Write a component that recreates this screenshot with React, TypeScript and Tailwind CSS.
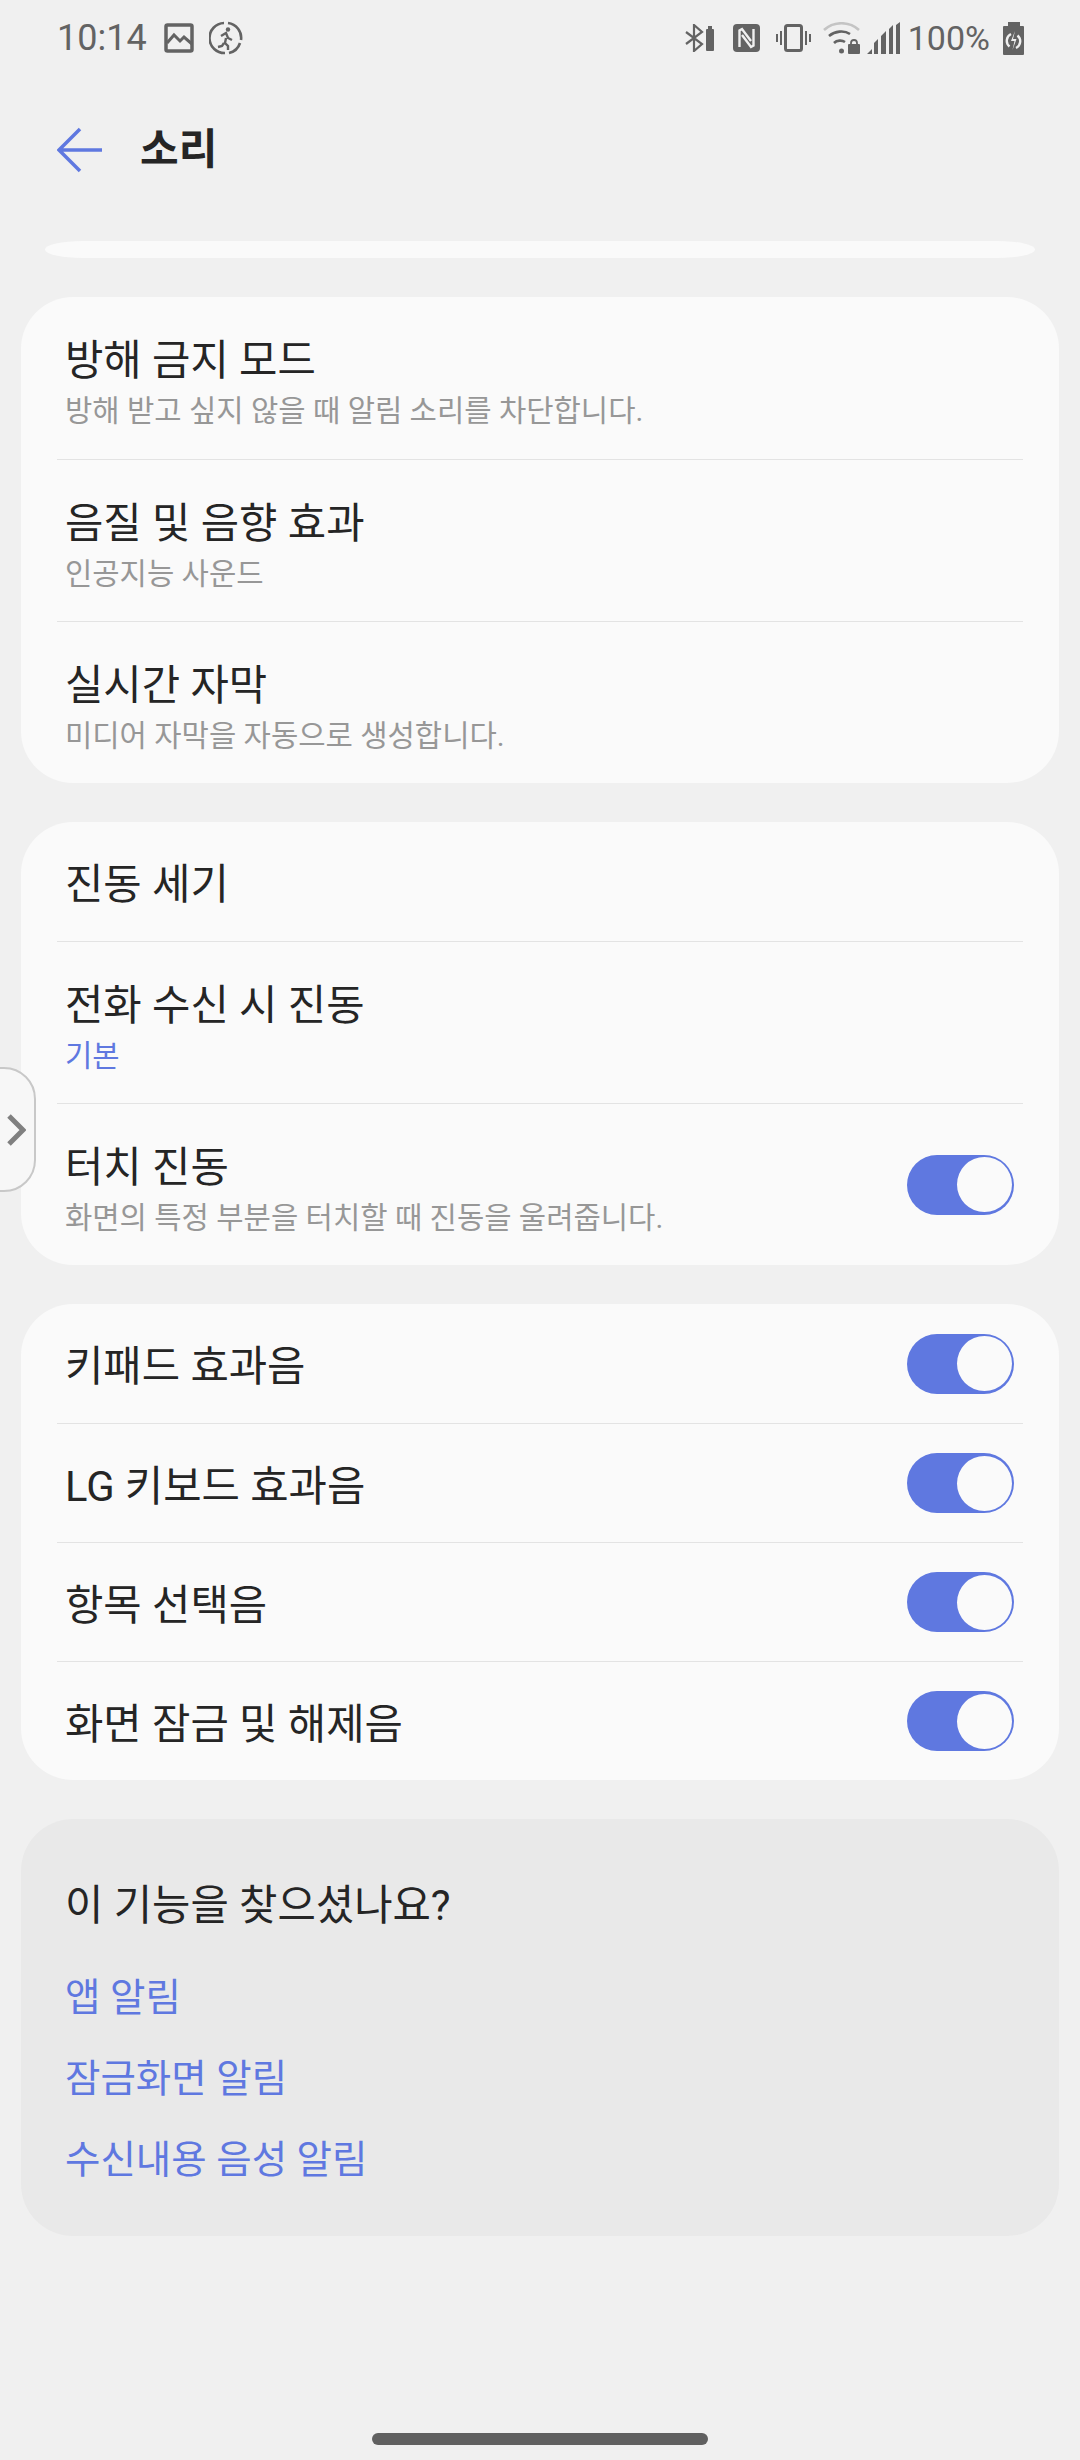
import React from "react";

const BLUE = "#5f78e0";

function Toggle() {
  return (
    <div className="w-[107px] h-[60px] rounded-full bg-[#5f78e0] flex items-center justify-end pr-[2px] shrink-0">
      <div className="w-[55px] h-[55px] rounded-full bg-[#fafafa]" />
    </div>
  );
}

function Row({
  title,
  sub,
  subBlue,
  toggle,
  first,
}: {
  title: string;
  sub?: string;
  subBlue?: boolean;
  toggle?: boolean;
  first?: boolean;
}) {
  return (
    <div className={`mx-[36px] flex items-center justify-between ${sub ? "h-[162px]" : "h-[119px]"} ${first ? "" : "border-t border-[#e3e3e3]"}`}>
      <div className={`pl-[8px] flex flex-col ${sub ? "pt-[9px]" : "pt-[7px]"}`}>
        <div className="text-[41.7px] leading-[54px] text-[#252525]">{title}</div>
        {sub && (
          <div className={`mt-[3px] text-[29.7px] leading-[40px] ${subBlue ? "text-[#5f78e0]" : "text-[#979797]"}`}>{sub}</div>
        )}
      </div>
      {toggle && (
        <div className="mr-[9px]">
          <Toggle />
        </div>
      )}
    </div>
  );
}

function Card({ children }: { children: React.ReactNode }) {
  return <div className="mx-[21px] mb-[39px] rounded-[52px] bg-[#fafafa] overflow-hidden">{children}</div>;
}

function StatusBar() {
  return (
    <div className="h-[76px] pl-[57px] pr-[56px] flex items-center justify-between text-[#636363] font-['Roboto',sans-serif]">
      <div className="flex items-center">
        <span className="text-[36px] leading-none">10:14</span>
        <svg className="ml-[17px]" width="30" height="30" viewBox="0 0 30 30" fill="none" stroke="#636363">
          <rect x="2" y="2" width="26" height="26" rx="1.5" strokeWidth="3.500" />
          <path d="M3 20l7-8 6 6 4-4 8 7" strokeWidth="3" />
        </svg>
        <svg className="ml-[15px]" width="34" height="34" viewBox="0 0 34 34" fill="none" stroke="#636363">
          <path d="M19 2a15 15 0 0 1 13 17M31 22a15 15 0 0 1-11 10M16 32A15 15 0 0 1 15 2" strokeWidth="2.6" />
          <circle cx="19" cy="8.5" r="2.200" fill="#636363" stroke="none" />
          <path d="M12 15l5-3 2 5 4 2M17 17l-1 5 3 3v4M15 22l-2 3-4 1" strokeWidth="2.4" />
        </svg>
      </div>
      <div className="flex items-center">
        <svg width="29" height="28" viewBox="0 0 29 28" fill="none" stroke="#636363" strokeWidth="2.2">
          <path d="M1 8l16 12-8 7V1l8 7L1 20" />
          <rect x="21" y="5" width="8" height="22" rx="1" fill="#636363" stroke="none" />
          <rect x="23" y="2" width="4" height="3" fill="#636363" stroke="none" />
        </svg>
        <svg className="ml-[19px]" width="27" height="28" viewBox="0 0 27 28" fill="none">
          <rect width="27" height="28" rx="4" fill="#636363" />
          <path d="M6.500 23V6.500L9 5l9 12M20.500 5v16.500L18 23 9 11" stroke="#f0f0f0" strokeWidth="2.400" />
        </svg>
        <svg className="ml-[16px]" width="35" height="28" viewBox="0 0 35 28" fill="none" stroke="#636363">
          <rect x="9.5" y="1.500" width="16" height="25" rx="2" strokeWidth="3" />
          <path d="M5 7v14M1 10v8M30 7v14M34 10v8" strokeWidth="2" />
        </svg>
        <svg className="ml-[12px]" width="37" height="32" viewBox="0 0 37 32" fill="none">
          <path d="M1 8c10-9 25-9 35 0" stroke="#c4c4c4" strokeWidth="2.6" />
          <path d="M6 14c6-5 15-6 21-2M11 21c3-3 8-3 11-1" stroke="#636363" strokeWidth="2.6" />
          <circle cx="18.500" cy="29" r="2.500" fill="#636363" />
          <rect x="25" y="22" width="12" height="10" rx="1" fill="#636363" />
          <path d="M28 22v-1a3 3 0 0 1 6 0v1" stroke="#636363" strokeWidth="1.800" />
        </svg>
        <svg className="ml-[7px]" width="33" height="32" viewBox="0 0 33 32" fill="#636363">
          <path d="M0 32l5-5v5zM7 32v-11l4-4v15zM14 32V14l5-5v23zM22 32V7l4-4v29zM29 32V3l4-3v32z" />
        </svg>
        <span className="ml-[8px] text-[34px] leading-none">100%</span>
        <svg className="ml-[13px]" width="21" height="33" viewBox="0 0 21 33">
          <path fill="#636363" d="M5 0h12v4h3a1 1 0 0 1 1 1v27a1 1 0 0 1-1 1H1a1 1 0 0 1-1-1V5a1 1 0 0 1 1-1h4z" />
          <path d="M8 12a7.500 7.500 0 0 0-1.500 12.500M13 26a7.500 7.500 0 0 0 1.500-12.500" fill="none" stroke="#f0f0f0" strokeWidth="2.4" />
          <path d="M12 9l-4 10h3.500l-2 9 4-11h-3.500z" fill="#f0f0f0" />
        </svg>
      </div>
    </div>
  );
}

export default function App() {
  return (
    <div className="relative w-[1080px] h-[2460px] overflow-hidden bg-[#f0f0f0] font-['Roboto','Noto_Sans_CJK_KR',sans-serif]">
      <StatusBar />

      {/* header */}
      <div className="h-[72px] mt-[38px] pl-[57px] flex items-center">
        <svg width="46" height="46" viewBox="0 0 46 46" fill="none" stroke={BLUE} strokeWidth="3.500">
          <path d="M45 23H2M23 2L2 23l21 21" />
        </svg>
        <div className="ml-[37px] text-[42px] font-bold text-[#252525] leading-none">소리</div>
      </div>

      {/* tail of the card scrolled away */}
      <div className="mx-[45px] mt-[55px] h-[17px] mb-[39px] bg-[#fafafa] rounded-[40px/9px]" />

      <Card>
        <Row first title="방해 금지 모드" sub="방해 받고 싶지 않을 때 알림 소리를 차단합니다." />
        <Row title="음질 및 음향 효과" sub="인공지능 사운드" />
        <Row title="실시간 자막" sub="미디어 자막을 자동으로 생성합니다." />
      </Card>

      <Card>
        <Row first title="진동 세기" />
        <Row title="전화 수신 시 진동" sub="기본" subBlue />
        <Row title="터치 진동" sub="화면의 특정 부분을 터치할 때 진동을 울려줍니다." toggle />
      </Card>

      <Card>
        <Row first title="키패드 효과음" toggle />
        <Row title="LG 키보드 효과음" toggle />
        <Row title="항목 선택음" toggle />
        <Row title="화면 잠금 및 해제음" toggle />
      </Card>

      <div className="mx-[21px] rounded-[52px] bg-[#e9e9e9] h-[417px] pl-[44px] pt-[60px]">
        <div className="text-[41.7px] leading-[54px] text-[#252525]">이 기능을 찾으셨나요?</div>
        <div className="mt-[38px] flex flex-col gap-[27px] text-[38.5px] leading-[54px] text-[#5f78e0]">
          <div>앱 알림</div>
          <div>잠금화면 알림</div>
          <div>수신내용 음성 알림</div>
        </div>
      </div>

      {/* edge panel handle */}
      <div className="absolute left-[-40px] top-[1067px] w-[76px] h-[125px] rounded-[32px] border-2 border-[#c8c8c8] bg-[#f7f7f7] flex items-center justify-end pr-[8px]">
        <svg width="20" height="32" viewBox="0 0 20 32" fill="none" stroke="#808080" strokeWidth="5">
          <path d="M3 2l14 14L3 30" />
        </svg>
      </div>

      {/* gesture bar */}
      <div className="absolute left-[372px] top-[2433px] w-[336px] h-[12px] rounded-full bg-[#606060]" />
    </div>
  );
}
